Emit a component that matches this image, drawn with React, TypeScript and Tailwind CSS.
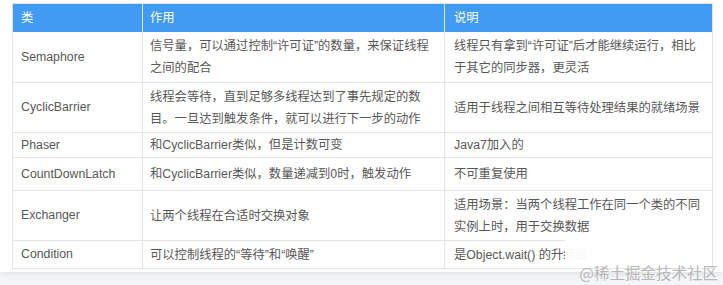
import React from 'react';

interface Row {
  name: string;
  usage: string[];
  note: string[];
  h: string;
}

const rows: Row[] = [
  { name: 'Semaphore', usage: ['信号量，可以通过控制“许可证”的数量，来保证线程', '之间的配合'], note: ['线程只有拿到“许可证”后才能继续运行，相比', '于其它的同步器，更灵活'], h: 'h-[50px]' },
  { name: 'CyclicBarrier', usage: ['线程会等待，直到足够多线程达到了事先规定的数', '目。一旦达到触发条件，就可以进行下一步的动作'], note: ['适用于线程之间相互等待处理结果的就绪场景'], h: 'h-[50px]' },
  { name: 'Phaser', usage: ['和CyclicBarrier类似，但是计数可变'], note: ['Java7加入的'], h: 'h-[25px]' },
  { name: 'CountDownLatch', usage: ['和CyclicBarrier类似，数量递减到0时，触发动作'], note: ['不可重复使用'], h: 'h-[33px]' },
  { name: 'Exchanger', usage: ['让两个线程在合适时交换对象'], note: ['适用场景：当两个线程工作在同一个类的不同', '实例上时，用于交换数据'], h: 'h-[50px]' },
  { name: 'Condition', usage: ['可以控制线程的“等待”和“唤醒”'], note: ['是Object.wait() 的升级版'], h: 'h-[28px]' },
];

const Lines: React.FC<{ lines: string[] }> = ({ lines }) => (
  <div className="flex flex-col">
    {lines.map((l) => (
      <span key={l} className="whitespace-nowrap leading-[22px]">{l}</span>
    ))}
  </div>
);

export default function App() {
  return (
    <div
      className="relative w-[723px] h-[285px] overflow-hidden bg-[#f4f5f6]"
      style={{ fontFamily: '"Liberation Sans", "Noto Sans CJK SC", sans-serif' }}
    >
      <div className="h-[272px] bg-white pl-[12px] pt-[3px] shadow-[0_2px_6px_rgba(0,0,0,0.08)]">
        <div className="w-[701px] border border-[#e3e3e3] text-[12.3px] text-[#585858]">
          <div className="grid h-[28px] grid-cols-[129px_302px_270px] bg-[#419bf2] text-white">
            <div className="flex items-center px-[8px]">类</div>
            <div className="flex items-center border-l border-[#d6e8fb] px-[7px]">作用</div>
            <div className="flex items-center border-l border-[#d6e8fb] px-[9px]">说明</div>
          </div>
          {rows.map((r, i) => (
            <div
              key={r.name}
              className={`grid grid-cols-[129px_302px_270px] ${r.h} ${i > 0 ? 'border-t border-[#e3e3e3]' : ''}`}
            >
              <div className="flex items-center px-[8px]">{r.name}</div>
              <div className="flex items-center border-l border-[#e3e3e3] px-[7px]">
                <Lines lines={r.usage} />
              </div>
              <div className="flex items-center border-l border-[#e3e3e3] px-[9px]">
                <Lines lines={r.note} />
              </div>
            </div>
          ))}
        </div>
      </div>
      <div className="absolute left-[565px] top-[240px] h-[26px] w-[147px] bg-white/95" />
      <div
        className="absolute right-[5px] top-[261px] text-[15.5px] leading-[22px] text-[#b8b8b8]"
        style={{ fontFamily: '"Noto Sans CJK SC", sans-serif' }}
      >
        @稀土掘金技术社区
      </div>
    </div>
  );
}
